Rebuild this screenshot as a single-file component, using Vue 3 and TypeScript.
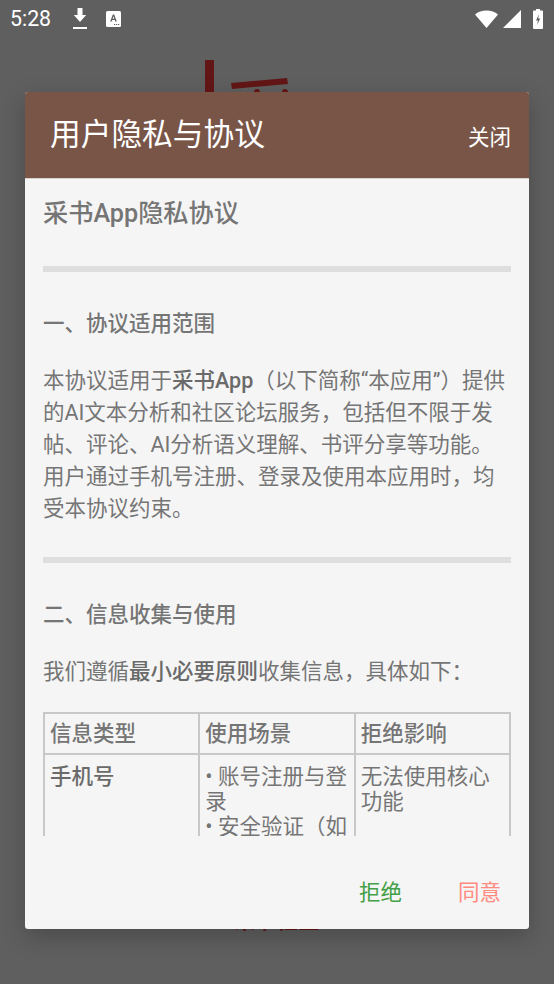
<script setup lang="ts">
const columns: string[] = ['信息类型', '使用场景', '拒绝影响']
</script>

<template>
  <div class="screen">
    <div class="status">
      <span class="time">5:28</span>
      <svg class="ic-dl" width="16" height="22" viewBox="0 0 16 22"><path d="M5.500 0h5v7h3.700L8 14 1.800 7h3.700z" fill="#fff"/><rect x="1" y="19" width="14" height="2" fill="#fff"/></svg>
      <svg class="ic-a" width="15" height="16" viewBox="0 0 15 16"><rect width="15" height="16" rx="1.500" fill="#fff"/><path d="M4.200 10.500 6.800 3.500h1.400L10.800 10.500H9.300L8.800 9H6.200l-.5 1.500zM6.600 7.800h1.800L7.500 5.300z" fill="#5f5f5f"/><rect x="8" y="13" width="1.200" height="1" fill="#5f5f5f"/><rect x="10" y="13" width="1.200" height="1" fill="#5f5f5f"/><rect x="12" y="13" width="1.200" height="1" fill="#5f5f5f"/></svg>
      <span class="spacer"></span>
      <svg width="23" height="18" viewBox="0 0 23 18"><path d="M0 4.500C3 1.800 7 .5 11.500 .5S20 1.800 23 4.500L11.500 18z" fill="#fff"/></svg>
      <svg class="ic-sig" width="18" height="18" viewBox="0 0 18 18"><path d="M0 18 18 0v18z" fill="#fff"/></svg>
      <svg class="ic-bat" width="10" height="20" viewBox="0 0 10 20"><path d="M3 0h4v1.500h2a1 1 0 0 1 1 1V19a1 1 0 0 1-1 1H1a1 1 0 0 1-1-1V2.500a1 1 0 0 1 1-1h2z" fill="#fff"/><path d="M6 5 3 11.500h2L4 16l3.200-6.500h-2z" fill="#5f5f5f"/></svg>
    </div>

    <svg class="peek-logo" width="100" height="40" viewBox="0 0 100 40" aria-hidden="true">
      <rect x="5" y="0" width="9" height="36" fill="#631616" />
      <path d="M31 23 87 18 88 24 32 29z" fill="#631616" />
      <circle cx="57" cy="32" r="3" fill="#631616" />
      <circle cx="85" cy="32" r="3" fill="#631616" />
    </svg>
    <div class="peek-text">采书社区</div>

    <section class="dialog">
      <header class="head">
        <h1>用户隐私与协议</h1>
        <span class="close">关闭</span>
      </header>
      <div class="body">
        <h2 class="doc-title">采书App隐私协议</h2>
        <hr />
        <h3>一、协议适用范围</h3>
        <p>本协议适用于<b>采书App</b>（以下简称“本应用”）提供的AI文本分析和社区论坛服务，包括但不限于发帖、评论、AI分析语义理解、书评分享等功能。用户通过手机号注册、登录及使用本应用时，均受本协议约束。</p>
        <hr />
        <h3>二、信息收集与使用</h3>
        <p class="lead">我们遵循<b>最小必要原则</b>收集信息，具体如下：</p>
        <table>
          <tbody>
            <tr><th v-for="c in columns" :key="c">{{ c }}</th></tr>
            <tr>
              <td><b>手机号</b></td>
              <td>• 账号注册与登录<br />• 安全验证（如短信验证码）</td>
              <td>无法使用核心功能</td>
            </tr>
          </tbody>
        </table>
      </div>
      <footer class="foot">
        <span class="reject">拒绝</span>
        <span class="agree">同意</span>
      </footer>
    </section>
  </div>
</template>

<style>
html, body { margin: 0; padding: 0; background: #5f5f5f; }
</style>

<style scoped>
.screen {
  position: relative;
  width: 554px;
  height: 984px;
  overflow: hidden;
  background: #5f5f5f;
  font-family: Roboto, "Noto Sans CJK SC", sans-serif;
}
.status {
  height: 38px;
  display: flex;
  align-items: center;
  padding: 0 11px 0 10px;
  box-sizing: border-box;
  color: #fff;
}
.time { font-size: 21.3px; line-height: 38px; }
.ic-dl { margin-left: 21px; }
.ic-a { margin-left: 18px; }
.spacer { flex: 1; }
.ic-sig { margin-left: 5px; }
.ic-bat { margin-left: 12px; }
.peek-logo {
  position: absolute;
  left: 200px;
  top: 60px;
}
.peek-text {
  position: absolute;
  left: 234px;
  top: 909px;
  font-size: 21.3px;
  line-height: 24px;
  font-weight: 700;
  color: #631616;
}
.dialog {
  position: absolute;
  left: 25px;
  top: 92px;
  width: 504px;
  height: 837px;
  display: flex;
  flex-direction: column;
  background: #f5f5f5;
  border-radius: 3px;
  overflow: hidden;
  box-shadow: 0 8px 24px rgba(0, 0, 0, 0.22);
}
.head {
  height: 87px;
  flex: none;
  display: flex;
  align-items: center;
  justify-content: space-between;
  padding: 0 18px 0 25px;
  background: #795548;
  color: #fff;
  border-bottom: 1px solid #d9d2cf;
  box-sizing: border-box;
}
.head h1 { margin: 0; font-size: 30.7px; font-weight: 400; line-height: 40px; }
.close { font-size: 21.5px; }
.body {
  height: 657px;
  flex: none;
  overflow: hidden;
  padding: 0 18px;
  box-sizing: border-box;
  color: #757575;
  font-size: 21.5px;
  line-height: 32px;
}
.doc-title { margin: 18px 0 0; font-size: 25.2px; line-height: 34px; font-weight: 500; }
hr { height: 6px; margin: 0; border: 0; background: #dedede; }
.doc-title + hr { margin-top: 35px; }
h3 { margin: 0; font-size: 21.5px; line-height: 32px; font-weight: 500; }
hr + h3 { margin-top: 36px; }
b { font-weight: 500; color: #6a6a6a; }
p { margin: 25px 0 32px; }
p.lead { margin: 25px 0 24px; }
table {
  width: 468px;
  border-collapse: collapse;
  table-layout: fixed;
  border: 2px solid #c0c0c0;
  line-height: 25px;
}
th, td {
  border: 2px solid #c8c8c8;
  padding: 7px 5px;
  text-align: left;
  vertical-align: top;
  font-size: 21.5px;
}
td { padding-top: 9px; }
th { font-weight: 500; }
.foot {
  flex: 1;
  display: flex;
  justify-content: flex-end;
  align-items: center;
  gap: 56px;
  padding: 16px 28px 0 0;
  font-size: 21.5px;
}
.reject { color: #43a047; }
.agree { color: #ff8a80; }
</style>
